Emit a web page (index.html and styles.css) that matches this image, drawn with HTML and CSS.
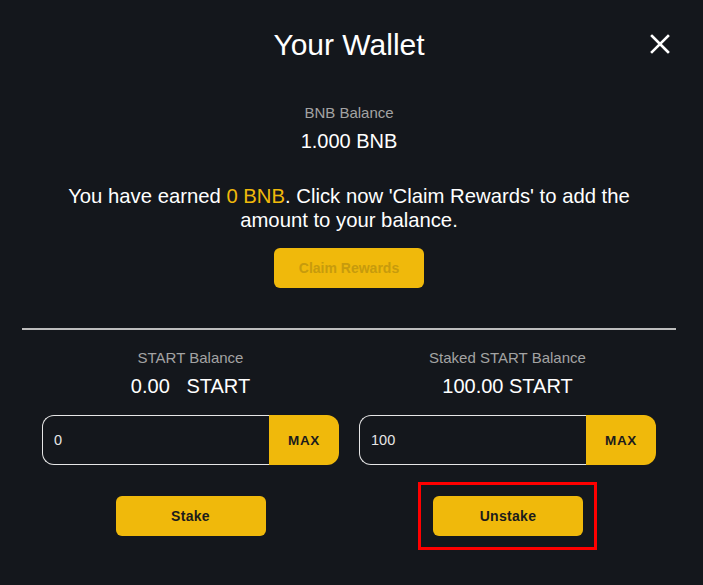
FILE: index.html
```html
<!DOCTYPE html>
<html>
<head>
<meta charset="utf-8">
<link rel="stylesheet" href="styles.css">
</head>
<body>
<div class="modal">
  <header class="header">
    <h1 class="title">Your Wallet</h1>
    <button class="close" aria-label="Close">
      <svg width="20" height="20" viewBox="0 0 20 20"><path d="M2 2 L18 18 M18 2 L2 18" stroke="#fff" stroke-width="2.6" stroke-linecap="square"/></svg>
    </button>
  </header>

  <section class="bnb">
    <div class="label">BNB Balance</div>
    <div class="value">1.000 BNB</div>
    <p class="earned">You have earned <span class="accent">0 BNB</span>. Click now 'Claim Rewards' to add the amount to your balance.</p>
    <button class="btn btn-disabled">Claim Rewards</button>
  </section>

  <hr class="divider">

  <section class="cols">
    <div class="col">
      <div class="label">START Balance</div>
      <div class="value">0.00&nbsp;&nbsp;&nbsp;START</div>
      <div class="field">
        <input class="amount" type="text" value="0">
        <button class="max">MAX</button>
      </div>
      <button class="btn">Stake</button>
    </div>
    <div class="col">
      <div class="label">Staked START Balance</div>
      <div class="value">100.00 START</div>
      <div class="field">
        <input class="amount" type="text" value="100">
        <button class="max">MAX</button>
      </div>
      <span class="highlight"><button class="btn">Unstake</button></span>
    </div>
  </section>
</div>
</body>
</html>
```

FILE: styles.css
```css
html, body {
  margin: 0;
  padding: 0;
  background: #14171c;
  font-family: "Liberation Sans", Arial, sans-serif;
  color: #ffffff;
}

.modal {
  width: 654px;
  margin-left: 22px;
  padding-bottom: 30px;
  display: flex;
  flex-direction: column;
  align-items: center;
}

.header {
  position: relative;
  width: 100%;
  display: flex;
  justify-content: center;
  padding-top: 28px;
}

.title {
  margin: 0;
  font-size: 30px;
  font-weight: 400;
  line-height: 34px;
}

.close {
  position: absolute;
  right: 6px;
  top: 34px;
  background: none;
  border: 0;
  padding: 0;
  width: 20px;
  height: 20px;
  cursor: pointer;
}

.close svg { display: block; }

.bnb {
  display: flex;
  flex-direction: column;
  align-items: center;
  margin-top: 42px;
}

.label {
  font-size: 15px;
  line-height: 17px;
  color: #a3a3a3;
}

.value {
  margin-top: 9px;
  font-size: 20px;
  line-height: 23px;
  color: #ffffff;
  white-space: pre;
}

.earned {
  margin: 31px 0 0;
  width: 620px;
  text-align: center;
  font-size: 20.3px;
  line-height: 24px;
}

.accent { color: #f0b90b; }

.btn {
  width: 150px;
  height: 40px;
  border: 0;
  border-radius: 6px;
  background: #f0b90b;
  color: #1c1c1c;
  font-family: "Liberation Sans", Arial, sans-serif;
  font-weight: 700;
  font-size: 14px;
  letter-spacing: 0.3px;
  cursor: pointer;
  display: block;
}

.bnb .btn { margin-top: 16px; }

.btn-disabled {
  color: #c79b0d;
  letter-spacing: 0;
}

.divider {
  width: 654px;
  height: 2px;
  margin: 40px 0 0;
  border: 0;
  background: #bdbdbd;
}

.cols {
  width: 614px;
  display: grid;
  grid-template-columns: 297px 297px;
  column-gap: 20px;
  align-items: start;
  margin-top: 19px;
}

.col {
  display: flex;
  flex-direction: column;
  align-items: center;
}

.field {
  margin-top: 17px;
  width: 297px;
  height: 50px;
  display: flex;
}

.amount {
  flex: 1;
  min-width: 0;
  box-sizing: border-box;
  height: 50px;
  margin: 0;
  padding: 0 0 0 11px;
  background: transparent;
  border: 1px solid #e6e6e6;
  border-right: 0;
  border-radius: 12px 0 0 12px;
  color: #e6e6e6;
  font-family: "Liberation Sans", Arial, sans-serif;
  font-size: 14.5px;
  outline: none;
}

.max {
  width: 70px;
  height: 50px;
  border: 0;
  border-radius: 0 12px 12px 0;
  background: #f0b90b;
  color: #1c1c1c;
  font-family: "Liberation Sans", Arial, sans-serif;
  font-weight: 700;
  font-size: 13.5px;
  letter-spacing: 0.6px;
  cursor: pointer;
}

.col > .btn { margin-top: 31px; }

.highlight {
  display: block;
  margin-top: 17px;
  padding: 11px 11px 11px 12px;
  border: 3px solid #ff0000;
}
```
